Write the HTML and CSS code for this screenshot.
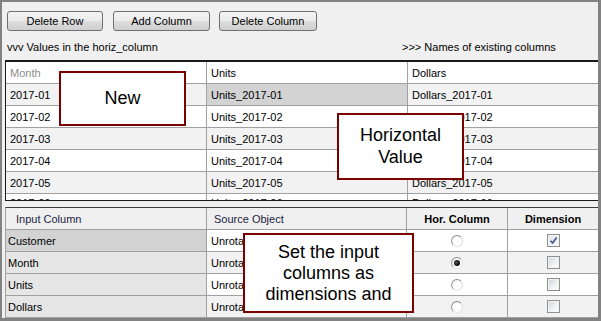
FILE: index.html
```html
<!DOCTYPE html>
<html lang="en">
<head>
    <meta charset="UTF-8">
    <title>Unrotate Columns</title>
    <link rel="stylesheet" href="styles.css">
</head>
<body>
    <div class="window">
        <div class="toolbar">
            <button class="btn btn-row">Delete Row</button>
            <button class="btn btn-add">Add Column</button>
            <button class="btn btn-del">Delete Column</button>
        </div>
        <div class="captions">
            <span>vvv Values in the horiz_column</span>
            <span>&gt;&gt;&gt; Names of existing columns</span>
        </div>

        <div class="grid upper">
            <table>
                <colgroup><col class="c1"><col class="c2"><col></colgroup>
                <tr><td class="muted">Month</td><td>Units</td><td>Dollars</td></tr>
                <tr class="alt"><td>2017-01</td><td class="selected">Units_2017-01</td><td>Dollars_2017-01</td></tr>
                <tr><td>2017-02</td><td>Units_2017-02</td><td>Dollars_2017-02</td></tr>
                <tr class="alt"><td>2017-03</td><td>Units_2017-03</td><td>Dollars_2017-03</td></tr>
                <tr><td>2017-04</td><td>Units_2017-04</td><td>Dollars_2017-04</td></tr>
                <tr class="alt"><td>2017-05</td><td>Units_2017-05</td><td>Dollars_2017-05</td></tr>
                <tr class="cut"><td>2017-06</td><td>Units_2017-06</td><td>Dollars_2017-06</td></tr>
            </table>
        </div>

        <div class="grid lower">
            <table>
                <colgroup><col class="c1"><col class="c2"><col class="c3"><col></colgroup>
                <tr class="head">
                    <th class="h-input">Input Column</th>
                    <th class="h-source">Source Object</th>
                    <th class="h-bold">Hor. Column</th>
                    <th class="h-bold">Dimension</th>
                </tr>
                <tr>
                    <td class="key current">Customer</td><td>Unrotated</td>
                    <td class="mid"><span class="radio"></span></td>
                    <td class="mid"><span class="check checked"><svg viewBox="0 0 9 9" width="9" height="9"><path d="M1.5 4.8 L3.6 7 L7.6 1.6" fill="none" stroke="#3d5393" stroke-width="1.6"/></svg></span></td>
                </tr>
                <tr class="alt">
                    <td class="key">Month</td><td>Unrotated</td>
                    <td class="mid"><span class="radio on"></span></td>
                    <td class="mid"><span class="check"></span></td>
                </tr>
                <tr>
                    <td class="key">Units</td><td>Unrotated</td>
                    <td class="mid"><span class="radio"></span></td>
                    <td class="mid"><span class="check"></span></td>
                </tr>
                <tr class="alt">
                    <td class="key">Dollars</td><td>Unrotated</td>
                    <td class="mid"><span class="radio"></span></td>
                    <td class="mid"><span class="check"></span></td>
                </tr>
            </table>
        </div>

        <div class="callout callout-new">New</div>
        <div class="callout callout-hor">Horizontal<br>Value</div>
        <div class="callout callout-set">Set the input<br>columns as<br>dimensions and</div>
    </div>
</body>
</html>
```

FILE: styles.css
```css
body {
    margin: 0;
}
.window {
    position: relative;
    box-sizing: border-box;
    width: 601px;
    height: 321px;
    overflow: hidden;
    padding-left: 3px;
    background-color: #f0f0f0;
    border-style: solid;
    border-color: #828282;
    border-width: 2px 3px 3px 2px;
    font-family: "Liberation Sans", Arial, sans-serif;
    font-size: 11px;
    color: #000;
}
.toolbar {
    display: flex;
    margin-top: 9px;
    padding-left: 2px;
    height: 20px;
}
.btn {
    box-sizing: border-box;
    height: 20px;
    padding: 0;
    border: 1px solid #707070;
    border-radius: 3px;
    background: linear-gradient(#f3f3f3 0%, #ebebeb 48%, #dddddd 52%, #cfcfcf 100%);
    font-family: "Liberation Sans", Arial, sans-serif;
    font-size: 11px;
    color: #000;
}
.btn-row { width: 96px; }
.btn-add { width: 97px; margin-left: 10px; }
.btn-del { width: 98px; margin-left: 9px; }

.captions {
    display: grid;
    grid-template-columns: 395px 1fr;
    height: 14px;
    line-height: 14px;
    margin: 9px 0 6px;
    padding-left: 2px;
}

.grid {
    box-sizing: border-box;
    width: 593px;
    overflow: hidden;
    background-color: #fff;
}
.grid table {
    border-collapse: separate;
    border-spacing: 0;
    table-layout: fixed;
    width: 100%;
}
.grid td,
.grid th {
    height: 21px;
    padding: 0 0 0 4px;
    border-right: 1px solid #a0a0a0;
    border-bottom: 1px solid #a0a0a0;
    white-space: nowrap;
    overflow: hidden;
    text-align: left;
    font-weight: normal;
}
.grid td:last-child,
.grid th:last-child {
    border-right: none;
}
.grid .alt td {
    background-color: #f2f2f2;
}
.grid .cut td {
    vertical-align: top;
    padding-top: 3px;
    line-height: 13px;
    height: 18px;
}

.upper {
    height: 141px;
    border-top: 2px solid #1a1a1a;
    border-left: 1px solid #1a1a1a;
    border-bottom: 1px solid #1a1a1a;
}
.upper .c1 { width: 201px; }
.upper .c2 { width: 201px; }
.upper .muted {
    color: #8c8c8c;
}
.grid .selected,
.grid .alt .selected {
    background-color: #d3d3d3;
}

.lower {
    margin-top: 6px;
    height: 111px;
    border-top: 1px solid #3c3c3c;
    border-left: 1px solid #a0a0a0;
}
.lower .c1 { width: 201px; }
.lower .c2 { width: 200px; }
.lower .c3 { width: 101px; }
.lower th {
    background-color: #f0f0f0;
    color: #1c1c44;
}
.lower .h-input { padding-left: 10px; }
.lower .h-source { padding-left: 7px; }
.lower .h-bold {
    padding: 0;
    text-align: center;
    font-weight: bold;
    color: #000;
}
.lower td.key {
    padding-left: 2px;
    background-color: #e6e6e6;
}
.lower td.key.current {
    background-color: #d3d3d3;
}
.lower td.mid {
    padding: 0;
    text-align: center;
    line-height: 0;
}

.radio {
    display: inline-block;
    box-sizing: border-box;
    width: 12px;
    height: 12px;
    border-radius: 50%;
    border: 1px solid;
    border-color: #8a8a8a #dcdcdc #e6e6e6 #9a9a9a;
    background: radial-gradient(circle at 60% 60%, #ffffff 40%, #e2e2e2 100%);
    position: relative;
}
.radio.on::after {
    content: "";
    position: absolute;
    left: 2px;
    top: 2px;
    width: 6px;
    height: 6px;
    border-radius: 50%;
    background: radial-gradient(circle at 40% 40%, #555 0%, #000 70%);
}
.check {
    display: inline-flex;
    align-items: center;
    justify-content: center;
    box-sizing: border-box;
    width: 13px;
    height: 13px;
    border: 1px solid #8e8f8f;
    background: linear-gradient(135deg, #d0d3d6 0%, #eef0f2 55%, #ffffff 100%);
    box-shadow: inset 0 0 0 1px #f4f4f4;
}
.check.checked {
    background: linear-gradient(135deg, #e2e6ea 0%, #f6f7f8 100%);
}

.callout {
    position: absolute;
    box-sizing: border-box;
    border: 2px solid #7b0000;
    background-color: #fff;
    font-family: "Liberation Sans", Arial, sans-serif;
    font-size: 18px;
    line-height: 21px;
    text-align: center;
    color: #000;
}
.callout-new {
    left: 57px;
    top: 69px;
    width: 127px;
    height: 55px;
    display: flex;
    align-items: center;
    justify-content: center;
}
.callout-hor {
    left: 335px;
    top: 111px;
    width: 127px;
    height: 67px;
    padding-top: 9px;
    line-height: 22px;
}
.callout-set {
    left: 241px;
    top: 231px;
    width: 171px;
    height: 80px;
    padding-top: 7px;
}
```
